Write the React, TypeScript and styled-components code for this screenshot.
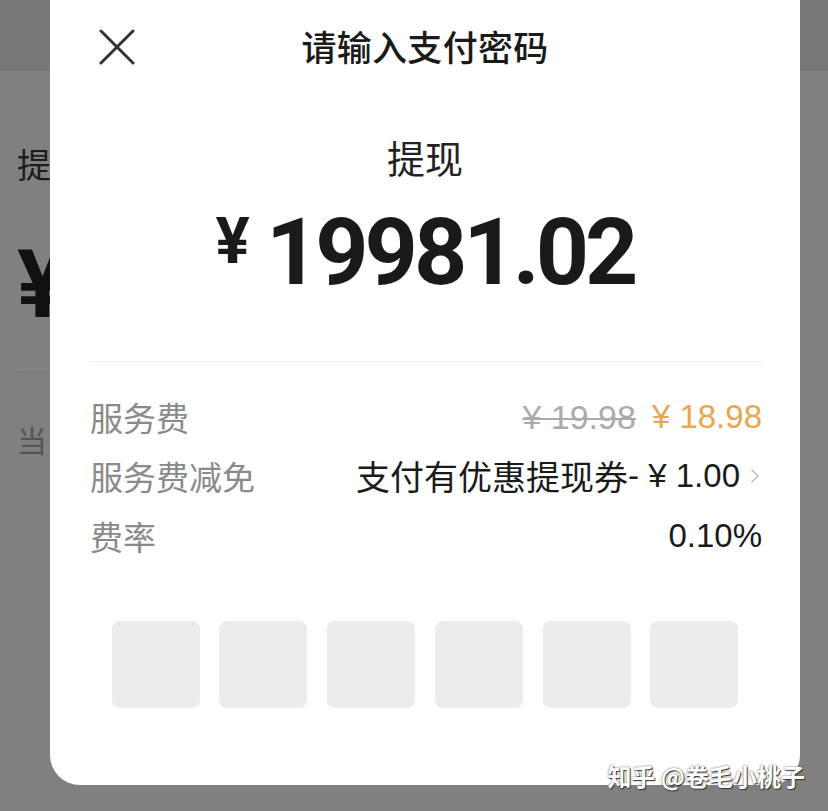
import styled, { createGlobalStyle } from 'styled-components';

const GlobalStyle = createGlobalStyle`
  html, body {
    margin: 0;
    padding: 0;
    background: #808080;
  }
  body {
    font-family: 'Liberation Sans', 'Noto Sans CJK SC', sans-serif;
  }
`;

const FEES = [
  { label: '服务费', kind: 'fee' },
  { label: '服务费减免', kind: 'coupon' },
  { label: '费率', kind: 'rate' },
] as const;

const PIN_SLOTS = [0, 1, 2, 3, 4, 5];

const App = () => {
  return (
    <Screen>
      <GlobalStyle />
      {/* the withdraw page that sits dimmed behind the sheet */}
      <BehindPage>
        <TopBand />
        <BehindBody>
          <BehindTitle>提</BehindTitle>
          <BehindAmount>¥</BehindAmount>
          <BehindRule />
          <BehindNote>当</BehindNote>
        </BehindBody>
      </BehindPage>

      <Sheet>
        <SheetHeader>
          <CloseButton aria-label="关闭">
            <svg width="36" height="36" viewBox="0 0 36 36">
              <path d="M2 2 L34 34 M34 2 L2 34" stroke="#333" strokeWidth="3" strokeLinecap="round" />
            </svg>
          </CloseButton>
          <SheetTitle>请输入支付密码</SheetTitle>
          <span />
        </SheetHeader>

        <Purpose>提现</Purpose>
        <Amount>
          <Currency>¥</Currency>
          <Digits>19981.02</Digits>
        </Amount>

        <Divider />

        <FeeList>
          {FEES.map((fee) => (
            <FeeRow key={fee.label}>
              <FeeLabel>{fee.label}</FeeLabel>
              {fee.kind === 'fee' && (
                <FeeValue>
                  <Struck>¥ 19.98</Struck>
                  <FeeAmount $tone="accent">¥ 18.98</FeeAmount>
                </FeeValue>
              )}
              {fee.kind === 'coupon' && (
                <FeeValue>
                  <CouponName>支付有优惠提现券</CouponName>
                  <FeeAmount>- ¥ 1.00</FeeAmount>
                  <Chevron width="10" height="16" viewBox="0 0 10 16">
                    <path d="M1.5 1.5 L8 8 L1.5 14.5" fill="none" stroke="#c2c2c2" strokeWidth="1.6" />
                  </Chevron>
                </FeeValue>
              )}
              {fee.kind === 'rate' && (
                <FeeValue>
                  <FeeAmount>0.10%</FeeAmount>
                </FeeValue>
              )}
            </FeeRow>
          ))}
        </FeeList>

        <PinRow>
          {PIN_SLOTS.map((slot) => (
            <PinCell key={slot} />
          ))}
        </PinRow>
      </Sheet>

      <Watermark>知乎 @卷毛小桃子</Watermark>
    </Screen>
  );
};

export default App;

const Screen = styled.div`
  position: relative;
  width: 828px;
  height: 811px;
  overflow: hidden;
  background: #808080;
`;

const BehindPage = styled.div`
  display: flex;
  flex-direction: column;
`;

const TopBand = styled.div`
  height: 70px;
  background: #777777;
  border-bottom: 1px solid #7b7b7b;
`;

const BehindBody = styled.div`
  display: flex;
  flex-direction: column;
  padding-left: 17px;
`;

const BehindTitle = styled.div`
  margin-top: 72px;
  font-family: 'Noto Sans CJK SC', sans-serif;
  font-size: 34px;
  line-height: 41px;
  color: #1c1c1c;
`;

const BehindAmount = styled.div`
  margin-top: 53px;
  font-family: Roboto, sans-serif;
  font-weight: 700;
  font-size: 95px;
  line-height: 1;
  color: #111;
`;

const BehindRule = styled.div`
  margin-top: 37px;
  width: 40px;
  height: 1px;
  background: #8a8a8a;
`;

const BehindNote = styled.div`
  margin-top: 51px;
  font-family: 'Noto Sans CJK SC', sans-serif;
  font-size: 30px;
  line-height: 36px;
  color: #555;
`;

const Sheet = styled.div`
  position: absolute;
  top: 0;
  left: 50px;
  width: 750px;
  height: 785px;
  background: #fff;
  border-radius: 0 0 30px 30px;
  display: flex;
  flex-direction: column;
`;

const SheetHeader = styled.div`
  height: 94px;
  display: grid;
  grid-template-columns: 1fr auto 1fr;
  align-items: center;
  padding: 0 50px;
`;

const CloseButton = styled.button`
  width: 36px;
  height: 36px;
  padding: 0;
  border: none;
  background: none;
  display: flex;
  align-items: center;
  justify-content: center;
  margin-left: -1px;
  margin-top: -1px;
  &:focus {
    outline: none;
  }
`;

const SheetTitle = styled.h1`
  margin: -2px 0 0;
  font-family: 'Noto Sans CJK SC', sans-serif;
  font-size: 35px;
  font-weight: 500;
  line-height: 42px;
  color: #1a1a1a;
  letter-spacing: 0.3px;
`;

const Purpose = styled.div`
  margin-top: 40px;
  text-align: center;
  font-family: 'Noto Sans CJK SC', sans-serif;
  font-size: 38px;
  line-height: 46px;
  color: #222;
`;

const Amount = styled.div`
  margin-top: 26px;
  display: flex;
  justify-content: center;
  align-items: flex-start;
  color: #1a1a1a;
`;

const Currency = styled.span`
  margin-top: 4px;
  margin-right: 16px;
  font-family: Roboto, sans-serif;
  font-weight: 700;
  font-size: 64px;
  line-height: 1;
`;

const Digits = styled.span`
  font-family: Roboto, sans-serif;
  font-weight: 700;
  font-size: 93px;
  line-height: 1;
  letter-spacing: -4px;
`;

const Divider = styled.div`
  margin: 62px 38px 0 40px;
  height: 1px;
  background: #efefef;
`;

const FeeList = styled.div`
  margin-top: 25px;
  padding: 0 38px 0 40px;
  display: flex;
  flex-direction: column;
`;

const FeeRow = styled.div`
  height: 59.5px;
  display: flex;
  align-items: center;
  justify-content: space-between;
`;

const FeeLabel = styled.span`
  font-family: 'Noto Sans CJK SC', sans-serif;
  font-size: 33px;
  line-height: 40px;
  color: #8a8a8a;
`;

const FeeValue = styled.span`
  display: flex;
  align-items: center;
  font-size: 33px;
  line-height: 40px;
`;

const Struck = styled.span`
  color: #ababab;
  font-size: 34px;
  text-decoration: line-through;
  text-decoration-thickness: 2px;
  margin-right: 16px;
`;

const CouponName = styled.span`
  font-family: 'Noto Sans CJK SC', sans-serif;
  font-size: 34px;
  color: #1a1a1a;
`;

const FeeAmount = styled.span<{ $tone?: 'accent' }>`
  color: ${(p) => (p.$tone === 'accent' ? '#e9a550' : '#1a1a1a')};
  white-space: pre;
`;

const Chevron = styled.svg`
  margin-left: 10px;
  margin-right: 2px;
`;

const PinRow = styled.div`
  margin: 55px auto 0;
  width: 627px;
  display: flex;
  justify-content: space-between;
`;

const PinCell = styled.div`
  width: 88px;
  height: 87px;
  border-radius: 8px;
  background: #ececec;
`;

const Watermark = styled.div`
  position: absolute;
  right: 23px;
  bottom: 20px;
  font-family: 'Noto Sans CJK SC', sans-serif;
  font-size: 24px;
  font-weight: 700;
  line-height: 30px;
  color: #fff;
  text-shadow: 1px 1px 1px #333, 0 0 2px #555;
  white-space: nowrap;
`;
